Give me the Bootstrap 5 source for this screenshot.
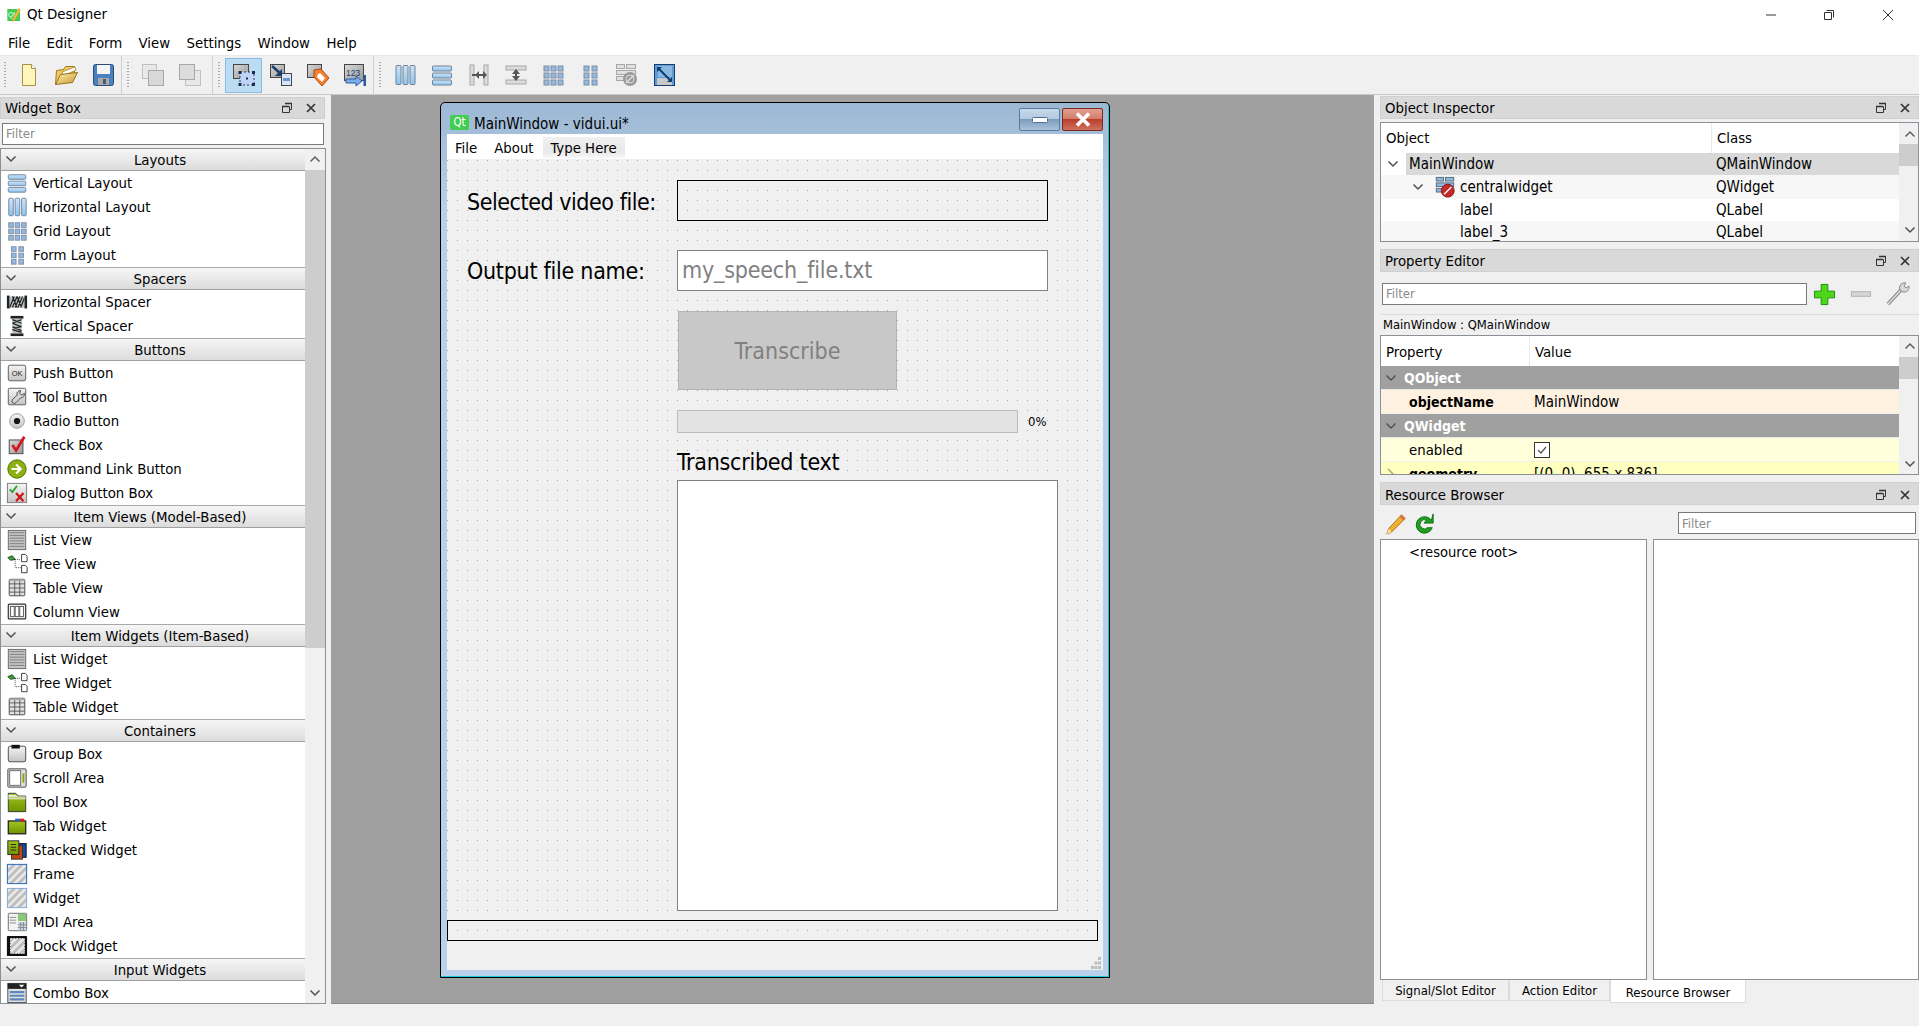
<!DOCTYPE html>
<html lang="en">
<head>
<meta charset="utf-8">
<title>Qt Designer</title>
<link href="https://cdn.jsdelivr.net/npm/bootstrap@5.3.0/dist/css/bootstrap.min.css" rel="stylesheet">
<style>
html,body{height:1026px;overflow:hidden}
body{font-family:"DejaVu Sans Condensed","DejaVu Sans",sans-serif;font-stretch:condensed;font-size:14.8px;line-height:1.2;color:#000;background:#f0f0f0;width:1919px}
svg{display:block;flex:none}
.flex-none{flex:none}
.ttl{height:30px;background:#fff;padding-left:6px}
.ttl-name{font-size:14.9px;margin-left:5px}
.wctl{width:58.5px;display:flex;justify-content:center}
.wctls{margin-right:2px}
.mnu{height:25px;background:#fff;padding-left:8px;gap:16.4px;font-size:14.8px}
.tbar{height:40px;background:#f0f0f0;border-top:1px solid #e8e8e8;border-bottom:1px solid #c8c8c8;flex:none}
.tgrp{height:38px;border-right:1px solid #d0d0d0}
.grip{width:2px;height:26px;margin-left:5px;margin-right:5px;background:repeating-linear-gradient(#a8a8a8 0 1px,transparent 1px 3px)}
.grip-first{margin-left:4px;margin-right:4px}
.tbtn{width:37px;height:35px;border:1px solid transparent}
.tbtn-on{background:#bcdcf4;border-color:#8cbce4}
.work{height:909px}
.ldock{width:331px;flex:none;padding-top:2px}
.dk-title{height:22px;background:#d9d9d9;border:1px solid #d0d0d0;padding:0 7px 0 4px;font-size:14.8px;flex:none}
.ldock .dk-title{width:325px;margin-bottom:4px}
.dk-ctl{gap:12px}
.flt{border:1px solid #7a7a7a;border-radius:0;padding:0 3px;height:22px;min-height:0;font:inherit;font-size:13px;background:#fff;box-shadow:none}
.flt::placeholder{color:#8a8a8a;opacity:1}
.ldock .flt{width:322px;margin-left:2px;margin-bottom:3px}
.wbox{width:326px;height:857px;border:1px solid #8a8f98;background:#fff;overflow:hidden}
.wlist{width:304px;overflow:hidden}
.whd{height:23px;background:linear-gradient(#f6f6f6,#dcdcdc);border-top:1px solid #a8a8a8;border-bottom:1px solid #a0a0a0;position:relative;text-align:center;font-size:14.8px;line-height:21px;padding-left:14px}
.wlist>.whd:first-child{border-top:0;height:22px}
.whd svg{position:absolute;left:3px;top:3px}
.wit{height:24px;padding-left:5px;gap:5px;white-space:nowrap}
.sbar{width:20px;flex:none;background:#f0f0f0;display:flex;flex-direction:column;align-items:center}
.wbox .sbar{height:855px}
.sb-b{height:21px;flex:none;display:flex;align-items:center;justify-content:center;width:100%}
.sb-h{background:#cdcdcd;width:100%;flex:none;height:478px}
.sb-r{width:21px;height:100%}
.sb-s{height:22px}
.mdi{flex:1 1 auto;background:#a0a0a0;border-bottom:1px solid #8a8a90;padding:7px 0 0 109px}
.fwin{width:670px;height:876px;border:1px solid #000;border-radius:5px 5px 0 0;background:linear-gradient(#9db8d4,#b9d1ea 110px);padding:0 6px 6px;box-shadow:inset -1px -1px 0 #1fc8e0;box-sizing:border-box}
.fw-t{height:31px;position:relative}
.fw-name{font-size:15px;margin-left:5px;padding-top:12px}
.qtico{width:19px;height:15px;background:#41cd52;color:#fff;font-size:11.500px;line-height:14px;text-align:center;border-radius:2px;margin-left:3px;margin-top:12px;font-family:"DejaVu Sans",sans-serif}
.fw-btn{width:41px;height:23px;border:1px solid #5f7a9a;border-radius:2px;margin-left:2px;display:flex;align-items:center;justify-content:center;background:linear-gradient(#c6d8ea 0,#b5cbe2 45%,#7e9cbc 50%,#a8c2dc 100%)}
.fw-x{background:linear-gradient(#e2a090 0,#d47e6c 45%,#b8402c 50%,#d07060 100%);border-color:#7a2a22}
.fw-ctl{position:absolute;right:0;top:5px;display:flex}
.fw-mnu{height:25px;background:#fff;padding:2px 0 0 8px}
.fm-i{margin-right:17px}
.fm-th{padding:0 8px;height:21px;background:linear-gradient(#f0f0f0,#e8e8e8 70%,#f8f8f8);margin-left:-8px}
.canv{height:786px;padding-top:21px;background-image:conic-gradient(from 270deg at 1px 1px,#a6a6a6 25%,transparent 0);background-size:10px 10px;background-position:0 1px;background-color:#f0f0f0}
.stbar{height:25px;background:#f0f0f0;position:relative}
.fm-row{display:flex;align-items:center;padding-left:20px;height:41px}
.fm-lbl{width:210px;font-size:23px;white-space:nowrap;height:41px}
.ls-a{letter-spacing:-.45px;line-height:45px}
.ls-b{letter-spacing:-.27px;line-height:43px}
.mt-fm{margin-top:29px}
.fm-box{width:371px;height:41px;border:1px solid #000}
.fm-le{width:371px;height:41px;border:1px solid #808080;border-radius:0;background:#fff;font:inherit;font-size:23px;letter-spacing:-.18px;padding:0 4px 1px;box-shadow:none}
.fm-le::placeholder{color:#808080;opacity:1}
.btn.fm-btn:disabled{margin:20px 0 0 231px;width:219px;height:79px;background:#c8c8c8;border:1px solid #b4b4b4;border-radius:0;color:#808080;font:inherit;font-size:23px;padding:3px 0 0;display:block;opacity:1}
.fm-prog{margin:20px 0 0 230px;height:23px;font-size:13px}
.fm-bar{width:341px;height:23px;background:#e3e3e3;border:1px solid #bcbcbc;border-radius:0;margin-right:10px}
.fm-cap{margin:12px 0 0 230px;font-size:23px;letter-spacing:-.25px;line-height:35px;height:35px;white-space:nowrap}
.fm-te{margin-left:230px;width:381px;height:431px;background:#fff;border:1px solid #808080}
.fm-st{margin-top:9px;width:651px;height:21px;border:1px solid #000}
.sgrip{position:absolute;right:2px;bottom:1px}
.rdock{width:545px;flex:none;padding:1px 0 0 6px;height:908px}
.rdock .dk-title{width:539px;height:23px}
.rdock .dk-shift{padding-top:2px}
.panel{border:1px solid #8a8f98;background:#fff;overflow:hidden;position:relative}
.p-obj{height:120px;margin:3px 0 7px;width:539px}
.p-prop{height:141px;width:539px}
.tcol{width:518px;overflow:hidden;flex:none}
.thd{height:30px;background:#fff}
.p-prop .thd>*{padding-top:2px}
.c1{width:331px;padding-left:5px;border-right:1px solid #e8e8e8;height:100%}
.c1b{width:149px;padding-left:5px;border-right:1px solid #e8e8e8;height:100%}
.c2{padding-left:5px}
.trow{font-size:15px;position:relative;white-space:nowrap}
.row-22{height:22px}
.row-24{height:24px}
.t-sel{background:#d9d9d9;margin-left:25px;width:493px}
.t-alt{background:#f7f7f7}
.col-cls{position:absolute;left:335px;top:0;height:100%;display:flex;align-items:center}
.cc-sel{left:310px}
.col-val{position:absolute;left:153px;top:1px;height:100%;display:flex;align-items:center;font-size:15px}
.tx-a{margin-left:-1px}
.arr-a{position:absolute;left:5px;top:34px}
.arr-b{margin-left:30px}
.ic-cw{margin-left:9px}
.tx-b{margin-left:4px}
.tx-c{margin-left:79px}
.pf-row{height:42px;padding:11px 0 0 2px;flex:none}
.pf-row .flt{width:425px;flex:none}
.pb-1i{margin:0 0 0 6px}
.pb-2i{margin:0 0 0 14px}
.pb-3i{margin:-1px 0 0 14px}
.obj-cap{height:21px;border-top:1px solid #dcdcdc;font-size:12.9px;padding-left:3px;flex:none}
.pr{height:24px;border-bottom:1px solid #f0f0f0;font-size:14.8px;position:relative;white-space:nowrap;padding-left:28px;padding-top:2px}
.pr-g{background:#a0a0a0;color:#fff;font-weight:700;font-size:14px;padding-left:23px;border-bottom-color:#e8e8e8}
.pr-b{font-size:14px}
.pr-o{background:#fff1e0}
.pr-y{background:#ffffdc}
.pr-y2{background:#ffffbf}
.arr-p{position:absolute;left:3px;top:5px}
.arr-g{position:absolute;left:4px;top:5px}
.cbox{width:16px;height:16px;border:1px solid #333;background:#fff}
.dk-res{margin-top:7px}
.res-bar{height:34px;flex:none;padding-top:8px}
.rb-1{margin-left:5px}
.rb-2{margin-left:6px}
.rb-f{width:238px;margin-left:243px;margin-top:-1px}
.p-resl{width:267px;height:441px;padding:3px 0 0 28px;font-size:14.6px}
.p-resr{width:266px;height:441px;margin-left:6px}
.dtabs{height:23px;padding-left:2px;font-size:13px;flex:none}
.dtab{height:21px;background:#f0f0f0;border:1px solid #dcdcdc;border-top:0;text-align:center;line-height:22px}
.dtab-on{height:23px;background:#fff;line-height:25px}
.dt-1{width:127px}
.dt-2{width:101px}
.dt-3{width:136px}
.sbot{height:22px;background:#f0f0f0;flex:none}
.sdefs{width:0;height:0;overflow:hidden}
.ic-lbl{font-family:"Liberation Sans",sans-serif}
</style>
</head>
<body class="d-flex flex-column">

<svg class="sdefs" width="0" height="0" aria-hidden="true">
<defs>
<pattern id="hat" width="6" height="6" patternUnits="userSpaceOnUse" patternTransform="rotate(45)"><rect width="6" height="6" fill="#e8e8e8"/><rect width="3" height="6" fill="#bdbdbd"/></pattern>
<linearGradient id="gy" x1="0" y1="0" x2="0" y2="1"><stop offset="0" stop-color="#f4f4f4"/><stop offset="1" stop-color="#c4c4c4"/></linearGradient>
<linearGradient id="gd" x1="0" y1="0" x2="1" y2="1"><stop offset="0" stop-color="#d8d8d8"/><stop offset="1" stop-color="#9a9a9a"/></linearGradient>
<linearGradient id="gb" x1="0" y1="0" x2="0" y2="1"><stop offset="0" stop-color="#cfe4f8"/><stop offset="1" stop-color="#8cc4ee"/></linearGradient>
<linearGradient id="gg" x1="0" y1="0" x2="0" y2="1"><stop offset="0" stop-color="#a4c420"/><stop offset="1" stop-color="#6e9400"/></linearGradient>
<linearGradient id="gf" x1="0" y1="0" x2="1" y2="1"><stop offset="0" stop-color="#fff0b0"/><stop offset="1" stop-color="#c89a30"/></linearGradient>
</defs>
<symbol id="i-v" viewBox="0 0 24 24"><g fill="url(#gb)" stroke="#6f8299"><rect x="2.500" y="3" width="19" height="5" rx="1"/><rect x="2.500" y="10" width="19" height="5" rx="1"/><rect x="2.500" y="17" width="19" height="5" rx="1"/></g></symbol>
<symbol id="i-h" viewBox="0 0 24 24"><g fill="url(#gb)" stroke="#6f8299"><rect x="3" y="2.500" width="5" height="19" rx="1"/><rect x="10" y="2.500" width="5" height="19" rx="1"/><rect x="17" y="2.500" width="5" height="19" rx="1"/></g></symbol>
<symbol id="i-g" viewBox="0 0 24 24"><g fill="#94b8e0" stroke="#7f8ea3"><rect x="3" y="3" width="5" height="5"/><rect x="10" y="3" width="5" height="5"/><rect x="17" y="3" width="5" height="5"/><rect x="3" y="10" width="5" height="5"/><rect x="10" y="10" width="5" height="5"/><rect x="17" y="10" width="5" height="5"/><rect x="3" y="17" width="5" height="5"/><rect x="10" y="17" width="5" height="5"/><rect x="17" y="17" width="5" height="5"/></g></symbol>
<symbol id="i-f" viewBox="0 0 24 24"><g fill="#94b8e0" stroke="#7f8ea3"><rect x="6" y="3" width="5" height="5"/><rect x="14" y="3" width="5" height="5"/><rect x="6" y="10" width="5" height="5"/><rect x="14" y="10" width="5" height="5"/><rect x="6" y="17" width="5" height="5"/><rect x="14" y="17" width="5" height="5"/></g></symbol>
<symbol id="i-hs" viewBox="0 0 24 24"><rect x="1" y="5" width="3" height="14" fill="#222"/><rect x="20" y="5" width="3" height="14" fill="#222"/><rect x="4" y="6" width="16" height="12" fill="#b8c0c4"/><path d="M4 18l5-12M7 18l5-12M10 18l5-12M13 18l5-12M16 18l4-10M7 6l5 12M12 6l5 12" stroke="#222" stroke-width="1.300" fill="none"/></symbol>
<symbol id="i-vs" viewBox="0 0 24 24"><rect x="5" y="1" width="14" height="3" fill="#222"/><rect x="5" y="20" width="14" height="3" fill="#222"/><rect x="7" y="4" width="10" height="16" fill="#b8c0c4"/><path d="M7 5l10 4M7 9l10 4M7 13l10 4M7 16l10 3M17 5L7 9M17 12L7 16" stroke="#222" stroke-width="1.300" fill="none"/></symbol>
<symbol id="i-ok" viewBox="0 0 24 24"><rect x="2.500" y="3.500" width="19" height="17" rx="2" fill="url(#gy)" stroke="#555"/></symbol>
<symbol id="i-tb" viewBox="0 0 24 24"><rect x="2.500" y="2.500" width="19" height="18" rx="1" fill="url(#gy)" stroke="#555"/><path d="M16 5a4 4 0 0 0-4 5l-5 5a2.500 2.500 0 0 0 4 3l5-5a4 4 0 0 0 4-5l-3 2-2-2z" fill="#d4d4d4" stroke="#444"/></symbol>
<symbol id="i-rd" viewBox="0 0 24 24"><circle cx="12" cy="12" r="8" fill="url(#gy)" stroke="#999"/><circle cx="12" cy="12" r="3.400" fill="#111"/></symbol>
<symbol id="i-ck" viewBox="0 0 24 24"><rect x="3.500" y="6.500" width="15" height="15" fill="url(#gd)" stroke="#444"/><path d="M7 12l4 6L20 3" fill="none" stroke="#d8141c" stroke-width="3"/></symbol>
<symbol id="i-cl" viewBox="0 0 24 24"><circle cx="12" cy="12" r="10" fill="#8cb010" stroke="#4a6a00"/><path d="M6 12h9M11 7l5 5-5 5" fill="none" stroke="#fff" stroke-width="2.400"/></symbol>
<symbol id="i-db" viewBox="0 0 24 24"><rect x="1.500" y="1.500" width="21" height="21" fill="url(#gy)" stroke="#777"/><path d="M4 8l3 3 5-7" fill="none" stroke="#30a030" stroke-width="2"/><path d="M11 12l8 9M19 12l-8 9" stroke="#d01818" stroke-width="2.500"/></symbol>
<symbol id="i-lv" viewBox="0 0 24 24"><rect x="2.500" y="1.500" width="19" height="21" fill="#c4c4c4" stroke="#666"/><path d="M4 4h16M4 7h16M4 10h16M4 13h16M4 16h16M4 19h16" stroke="#7c7c7c"/></symbol>
<symbol id="i-tv" viewBox="0 0 24 24"><path d="M2 5l5-2 3 4-5 1z" fill="#3c9c3c" stroke="#1c4c1c"/><path d="M10 7h6M10 7v9h6" stroke="#444" stroke-dasharray="1 1" fill="none"/><path d="M17 1.500h4l2 2v6h-6zM17 13.500h4l2 2v6h-6z" fill="#fff" stroke="#333"/></symbol>
<symbol id="i-tt" viewBox="0 0 24 24"><rect x="3.500" y="2.500" width="17" height="18" rx="1" fill="#e0e0e0" stroke="#444"/><path d="M3.500 7.500h17M3.500 12h17M3.500 16.500h17M9.500 2.500v18M15 2.500v18" stroke="#555"/><path d="M3.500 2.500h17v2h-17z" fill="#aaa"/></symbol>
<symbol id="i-cv" viewBox="0 0 24 24"><rect x="2.500" y="3.500" width="19" height="16" rx="1" fill="#f0f0f0" stroke="#333" stroke-width="1.300"/><rect x="5" y="6" width="4" height="11" fill="#fff" stroke="#555"/><rect x="10" y="6" width="4" height="11" fill="#fff" stroke="#555"/><rect x="15" y="6" width="4" height="11" fill="#fff" stroke="#555"/></symbol>
<symbol id="i-gb" viewBox="0 0 24 24"><rect x="2.500" y="3.500" width="19" height="17" rx="2" fill="url(#gy)" stroke="#444"/><rect x="6" y="2" width="9" height="4" fill="#111"/></symbol>
<symbol id="i-sa" viewBox="0 0 24 24"><rect x="2" y="2" width="20" height="20" rx="1" fill="#ddd" stroke="#444"/><rect x="4" y="4" width="12" height="16" fill="#fff" stroke="#666"/><rect x="18" y="7" width="2" height="10" fill="#88a800"/></symbol>
<symbol id="i-tx" viewBox="0 0 24 24"><path d="M2.500 2.500h8l3 3h8v17h-19z" fill="url(#gg)" stroke="#333"/><path d="M2.500 5h9M2.500 8.500h19M2.500 6.500h19" stroke="#eee" stroke-width="1.200"/></symbol>
<symbol id="i-tw" viewBox="0 0 24 24"><rect x="2.500" y="6.500" width="19" height="14" fill="url(#gg)" stroke="#222" stroke-width="1.400"/><rect x="10" y="4" width="5" height="3" fill="#1c6cc8"/><rect x="15" y="4" width="5" height="3" fill="#d02020"/></symbol>
<symbol id="i-sw" viewBox="0 0 24 24"><rect x="11" y="5" width="11" height="15" fill="#1848a0" stroke="#111"/><rect x="6" y="7" width="12" height="15" fill="#c04810" stroke="#333"/><rect x="2" y="2" width="12" height="15" fill="url(#gg)" stroke="#222"/><path d="M5 6h6M5 9h6M5 12h6" stroke="#222"/></symbol>
<symbol id="i-fr" viewBox="0 0 24 24"><rect x="1.500" y="1.500" width="21" height="21" fill="url(#hat)" stroke="#2e6ab8" stroke-width="1.100"/></symbol>
<symbol id="i-wd" viewBox="0 0 24 24"><rect x="1.500" y="1.500" width="21" height="21" fill="url(#hat)" stroke="#7ea6dc"/></symbol>
<symbol id="i-md" viewBox="0 0 24 24"><rect x="2.500" y="2.500" width="20" height="19" rx="1" fill="#f2f2f2" stroke="#666"/><rect x="13" y="3" width="9" height="8" fill="#8cc878"/><rect x="13" y="12" width="9" height="9" fill="#c8d8ee"/><path d="M4 7h7M4 10h7M4 13h7M13 15h9M13 18h9M16 12v9M19 12v9" stroke="#888"/></symbol>
<symbol id="i-dk" viewBox="0 0 24 24"><rect x="1" y="1" width="22" height="22" rx="1" fill="#111"/><rect x="5" y="4" width="15" height="16" fill="url(#hat)" stroke="#fff" stroke-dasharray="2 1"/></symbol>
<symbol id="i-cb" viewBox="0 0 24 24"><rect x="2" y="1.500" width="20" height="21" fill="#e0e0e0" stroke="#444"/><rect x="2" y="1.500" width="20" height="6" fill="#222"/><path d="M14 3l3 3 3-3z" fill="#fff"/><path d="M4 11h16M4 15h16M4 19h16" stroke="#5c88bc" stroke-width="2.400"/></symbol>
<symbol id="i-chev" viewBox="0 0 14 14"><path d="M2.500 4.500L7 9l4.500-4.500" fill="none" stroke="#505050" stroke-width="1.500"/></symbol>
<symbol id="i-chev-u" viewBox="0 0 14 14"><path d="M2.500 9.500L7 5l4.500 4.500" fill="none" stroke="#606060" stroke-width="1.500"/></symbol>
<symbol id="i-float" viewBox="0 0 12 12"><path d="M4.500 1.500h6v6h-2M1.500 4.500h7v6h-7z" fill="none" stroke="#333"/><path d="M4 1.500h7M1 4.500h7" stroke="#333" stroke-width="1.300"/></symbol>
<symbol id="i-x" viewBox="0 0 12 12"><path d="M2 2l8 8M10 2l-8 8" stroke="#333" stroke-width="1.700"/></symbol>
<symbol id="i-new" viewBox="0 0 24 24"><path d="M5.500 1.500h9l4 4v17h-13z" fill="#fff6bc" stroke="#a89048"/><path d="M14.500 1.500v4h4" fill="#fff" stroke="#a89048"/></symbol>
<symbol id="i-open" viewBox="0 0 24 24"><path d="M1.500 21.500l1-14 7-1 2-3h9v6z" fill="#f0c860" stroke="#a07c20"/><path d="M8 9l13-5 1 3-13 6z" fill="#fff" stroke="#b89a50"/><path d="M1.500 21.500l5-10 17-2-5 10z" fill="url(#gf)" stroke="#987020"/></symbol>
<symbol id="i-save" viewBox="0 0 24 24"><rect x="2.500" y="1.500" width="20" height="21" rx="2" fill="#4a80c0" stroke="#2c4c78"/><rect x="6" y="2" width="13" height="9" fill="#f4f4f4"/><rect x="7" y="15" width="11" height="7" fill="#a8a8a8"/><rect x="12" y="16" width="3" height="5" fill="#4a5a70"/></symbol>
<symbol id="i-c1" viewBox="0 0 24 24"><rect x="1.500" y="1.500" width="14" height="14" fill="#e8e8e8" stroke="#c0c0c0"/><rect x="7.500" y="7.500" width="15" height="15" fill="#d8d8d8" stroke="#a8a8a8"/></symbol>
<symbol id="i-c2" viewBox="0 0 24 24"><rect x="7.500" y="7.500" width="15" height="15" fill="#e8e8e8" stroke="#c0c0c0"/><rect x="1.500" y="1.500" width="15" height="15" fill="#dcdcdc" stroke="#a8a8a8"/></symbol>
<symbol id="i-ed" viewBox="0 0 24 24"><rect x="1.500" y="1.500" width="15" height="14" fill="url(#gd)" stroke="#444"/><rect x="8" y="9" width="14" height="13" fill="#c0d4fa" stroke="#2c3c60" stroke-dasharray="2 2"/><g fill="#1c2c50"><rect x="6.500" y="8" width="3" height="3"/><rect x="20" y="8" width="3" height="3"/><rect x="6.500" y="20" width="3" height="3"/><rect x="20" y="20" width="3" height="3"/><rect x="14" y="14.500" width="2" height="2"/></g></symbol>
<symbol id="i-sg" viewBox="0 0 24 24"><rect x="1.500" y="1.500" width="14" height="13" fill="url(#gd)" stroke="#444"/><rect x="12.500" y="10.500" width="10" height="12" fill="#d8e4f4" stroke="#445"/><rect x="14" y="15" width="7" height="3" fill="#6a94cc"/><path d="M3 3l9 8" stroke="#1c3c70" stroke-width="2.400"/><path d="M13 6v7H6z" fill="#1c3c70"/></symbol>
<symbol id="i-bd" viewBox="0 0 24 24"><rect x="1.500" y="1.500" width="14" height="13" fill="url(#gd)" stroke="#444"/><path d="M8 7l7-1 8 9-7 8-8-9z" fill="#f48030" stroke="#b04810"/><path d="M12 11l2-1 5 5-3 4-5-5z" fill="#fff"/></symbol>
<symbol id="i-tab" viewBox="0 0 24 24"><rect x="1.500" y="1.500" width="19" height="16" fill="url(#gd)" stroke="#444"/></symbol>
<symbol id="i-tab2" viewBox="0 0 24 24"><path d="M3 16h10v-3l6 5-6 5v-3H3z" fill="#7caeea" stroke="#2c5ca0"/><rect x="20.500" y="12" width="2.500" height="11" fill="#2c5ca0"/></symbol>
<symbol id="i-hbrk" viewBox="0 0 24 24"><g fill="#dcdcdc" stroke="#a8a8a8"><rect x="3" y="2" width="4" height="20"/><rect x="17" y="2" width="4" height="20"/></g><path d="M5 12h14" stroke="#555" stroke-width="2"/><path d="M8 12l4-4v8zM20 12l-4-4v8z" fill="#555"/></symbol>
<symbol id="i-vbrk" viewBox="0 0 24 24"><g fill="#dcdcdc" stroke="#a8a8a8"><rect x="2" y="3" width="20" height="4"/><rect x="2" y="17" width="20" height="4"/></g><path d="M12 7v10" stroke="#555" stroke-width="2"/><path d="M12 6l-4 5h8zM12 18l-4-5h8z" fill="#555"/></symbol>
<symbol id="i-brk" viewBox="0 0 24 24"><g fill="#e0e0e0" stroke="#a8a8a8"><rect x="1.500" y="1.500" width="8" height="4"/><rect x="11.500" y="1.500" width="9" height="4"/><rect x="1.500" y="7.500" width="19" height="4"/><rect x="1.500" y="13.500" width="12" height="4"/></g><circle cx="15" cy="16" r="7" fill="#9a9a9a"/><path d="M11 20l8-8" stroke="#ddd" stroke-width="1.500"/><circle cx="15" cy="16" r="4" fill="none" stroke="#ddd"/></symbol>
<symbol id="i-brk2" viewBox="0 0 24 24"><g fill="#8cb8e0" stroke="#586878"><rect x="2.500" y="1.500" width="8" height="4"/><rect x="12.500" y="1.500" width="9" height="4"/><rect x="2.500" y="7.500" width="19" height="4"/><rect x="2.500" y="13.500" width="12" height="4"/></g><circle cx="15" cy="16" r="7" fill="#c82828" stroke="#7c1010"/><path d="M11 20l8-8" stroke="#fff" stroke-width="1.500"/></symbol>
<symbol id="i-adj" viewBox="0 0 24 24"><rect x="2.500" y="1.500" width="20" height="21" fill="#5c9cd8" stroke="#1c3c70"/><rect x="5" y="15" width="15" height="7" fill="#c8c8c8"/><rect x="6" y="3" width="14" height="11" fill="#8ab8e0"/><path d="M6 5l13 13" stroke="#0c3c70" stroke-width="2"/><path d="M5 4h5l-5 5zM20 19h-5l5-5z" fill="#0c3c70"/></symbol>
<symbol id="i-plus" viewBox="0 0 24 24"><path d="M8.500 1.500h7v7h7v7h-7v7h-7v-7h-7v-7h7z" fill="#4cd818" stroke="#1c8c10"/></symbol>
<symbol id="i-minus" viewBox="0 0 24 24"><rect x="1.500" y="9.500" width="21" height="5" fill="#d4d4d4" stroke="#b0b0b0"/></symbol>
<symbol id="i-wr" viewBox="0 0 24 24"><path d="M2 22l13-14" stroke="#888" stroke-width="3.500"/><path d="M2 22l13-14" stroke="#e8e8e8" stroke-width="1.200"/><path d="M20 1a5 5 0 0 0-6 7l3 2a5 5 0 0 0 6-6l-3 2-2-2z" fill="#d8d8d8" stroke="#888"/></symbol>
<symbol id="i-pen" viewBox="0 0 24 24"><path d="M2 23l2-6L18 2l4 4L7 21z" fill="#f0b030" stroke="#a87018"/><path d="M2 23l2-6 3 4z" fill="#f8e0b0"/><path d="M18 2l4 4-2 2-4-4z" fill="#e07040"/></symbol>
<symbol id="i-rf" viewBox="0 0 24 24"><path d="M20 8a9 9 0 1 0 1 8h-5a5 5 0 1 1-1-8l-3 3h10V1z" fill="#20a020" stroke="#0c6c0c"/></symbol>
<symbol id="i-logo" viewBox="0 0 24 24"><path d="M2 3h14l5 5v13H2z" fill="#41cd52"/></symbol>
<symbol id="i-logo2" viewBox="0 0 24 24"><path d="M19 2l3 2-9 16-4 2 1-4z" fill="#f0c040" stroke="#c09020" stroke-width=".5"/></symbol>
</svg>

<header class="ttl d-flex align-items-center flex-none">
  <svg width="16" height="16" viewBox="0 0 24 24"><use href="#i-logo"/><text class="ic-lbl" x="3" y="15" font-size="10" fill="#fff">Qt</text><use href="#i-logo2"/></svg>
  <span class="ttl-name">Qt Designer</span>
  <div class="ms-auto d-flex wctls">
    <div class="wctl"><svg width="12" height="12" viewBox="0 0 12 12"><path d="M1 6h10" stroke="#333"/></svg></div>
    <div class="wctl"><svg width="12" height="12" viewBox="0 0 12 12"><path d="M3.500 1.500h7v7M1.500 3.500h7v7h-7z" fill="none" stroke="#333"/></svg></div>
    <div class="wctl"><svg width="12" height="12" viewBox="0 0 12 12"><path d="M1 1l10 10M11 1L1 11" stroke="#333"/></svg></div>
  </div>
</header>
<nav class="mnu d-flex align-items-center flex-none">
  <span>File</span><span>Edit</span><span>Form</span><span>View</span><span>Settings</span><span>Window</span><span>Help</span>
</nav>
<div class="tbar d-flex align-items-center">
  <div class="tgrp d-flex align-items-center">
    <div class="grip grip-first"></div>
    <div class="tbtn d-flex align-items-center justify-content-center"><svg width="24" height="24"><use href="#i-new"/></svg></div>
    <div class="tbtn d-flex align-items-center justify-content-center"><svg width="24" height="24"><use href="#i-open"/></svg></div>
    <div class="tbtn d-flex align-items-center justify-content-center"><svg width="24" height="24"><use href="#i-save"/></svg></div>
  </div>
  <div class="tgrp d-flex align-items-center pe-1">
    <div class="grip"></div>
    <div class="tbtn d-flex align-items-center justify-content-center"><svg width="24" height="24"><use href="#i-c1"/></svg></div>
    <div class="tbtn d-flex align-items-center justify-content-center"><svg width="24" height="24"><use href="#i-c2"/></svg></div>
  </div>
  <div class="tgrp d-flex align-items-center">
    <div class="grip"></div>
    <div class="tbtn tbtn-on d-flex align-items-center justify-content-center"><svg width="24" height="24"><use href="#i-ed"/></svg></div>
    <div class="tbtn d-flex align-items-center justify-content-center"><svg width="24" height="24"><use href="#i-sg"/></svg></div>
    <div class="tbtn d-flex align-items-center justify-content-center"><svg width="24" height="24"><use href="#i-bd"/></svg></div>
    <div class="tbtn d-flex align-items-center justify-content-center"><svg width="24" height="24" viewBox="0 0 24 24"><use href="#i-tab"/><text class="ic-lbl" x="3" y="13" font-size="8.500" fill="#1c3c70">123</text><use href="#i-tab2"/></svg></div>
  </div>
  <div class="d-flex align-items-center">
    <div class="grip"></div>
    <div class="tbtn d-flex align-items-center justify-content-center"><svg width="24" height="24"><use href="#i-h"/></svg></div>
    <div class="tbtn d-flex align-items-center justify-content-center"><svg width="24" height="24"><use href="#i-v"/></svg></div>
    <div class="tbtn d-flex align-items-center justify-content-center"><svg width="24" height="24"><use href="#i-hbrk"/></svg></div>
    <div class="tbtn d-flex align-items-center justify-content-center"><svg width="24" height="24"><use href="#i-vbrk"/></svg></div>
    <div class="tbtn d-flex align-items-center justify-content-center"><svg width="24" height="24"><use href="#i-g"/></svg></div>
    <div class="tbtn d-flex align-items-center justify-content-center"><svg width="24" height="24"><use href="#i-f"/></svg></div>
    <div class="tbtn d-flex align-items-center justify-content-center"><svg width="24" height="24"><use href="#i-brk"/></svg></div>
    <div class="tbtn d-flex align-items-center justify-content-center"><svg width="24" height="24"><use href="#i-adj"/></svg></div>
  </div>
</div>

<main class="work d-flex flex-none">
  <aside class="ldock d-flex flex-column">
    <div class="dk-title d-flex align-items-center justify-content-between"><span>Widget Box</span><div class="d-flex dk-ctl"><svg width="12" height="12"><use href="#i-float"/></svg><svg width="12" height="12"><use href="#i-x"/></svg></div></div>
    <input class="form-control flt" type="text" placeholder="Filter">
    <div class="wbox d-flex">
      <div class="wlist">
        <div class="whd"><svg width="14" height="14"><use href="#i-chev"/></svg>Layouts</div>
        <div class="wit d-flex align-items-center"><svg width="22" height="22"><use href="#i-v"/></svg>Vertical Layout</div>
        <div class="wit d-flex align-items-center"><svg width="22" height="22"><use href="#i-h"/></svg>Horizontal Layout</div>
        <div class="wit d-flex align-items-center"><svg width="22" height="22"><use href="#i-g"/></svg>Grid Layout</div>
        <div class="wit d-flex align-items-center"><svg width="22" height="22"><use href="#i-f"/></svg>Form Layout</div>
        <div class="whd"><svg width="14" height="14"><use href="#i-chev"/></svg>Spacers</div>
        <div class="wit d-flex align-items-center"><svg width="22" height="22"><use href="#i-hs"/></svg>Horizontal Spacer</div>
        <div class="wit d-flex align-items-center"><svg width="22" height="22"><use href="#i-vs"/></svg>Vertical Spacer</div>
        <div class="whd"><svg width="14" height="14"><use href="#i-chev"/></svg>Buttons</div>
        <div class="wit d-flex align-items-center"><svg width="22" height="22" viewBox="0 0 24 24"><use href="#i-ok"/><text class="ic-lbl" x="12" y="15" text-anchor="middle" font-size="8" fill="#222">OK</text></svg>Push Button</div>
        <div class="wit d-flex align-items-center"><svg width="22" height="22"><use href="#i-tb"/></svg>Tool Button</div>
        <div class="wit d-flex align-items-center"><svg width="22" height="22"><use href="#i-rd"/></svg>Radio Button</div>
        <div class="wit d-flex align-items-center"><svg width="22" height="22"><use href="#i-ck"/></svg>Check Box</div>
        <div class="wit d-flex align-items-center"><svg width="22" height="22"><use href="#i-cl"/></svg>Command Link Button</div>
        <div class="wit d-flex align-items-center"><svg width="22" height="22"><use href="#i-db"/></svg>Dialog Button Box</div>
        <div class="whd"><svg width="14" height="14"><use href="#i-chev"/></svg>Item Views (Model-Based)</div>
        <div class="wit d-flex align-items-center"><svg width="22" height="22"><use href="#i-lv"/></svg>List View</div>
        <div class="wit d-flex align-items-center"><svg width="22" height="22"><use href="#i-tv"/></svg>Tree View</div>
        <div class="wit d-flex align-items-center"><svg width="22" height="22"><use href="#i-tt"/></svg>Table View</div>
        <div class="wit d-flex align-items-center"><svg width="22" height="22"><use href="#i-cv"/></svg>Column View</div>
        <div class="whd"><svg width="14" height="14"><use href="#i-chev"/></svg>Item Widgets (Item-Based)</div>
        <div class="wit d-flex align-items-center"><svg width="22" height="22"><use href="#i-lv"/></svg>List Widget</div>
        <div class="wit d-flex align-items-center"><svg width="22" height="22"><use href="#i-tv"/></svg>Tree Widget</div>
        <div class="wit d-flex align-items-center"><svg width="22" height="22"><use href="#i-tt"/></svg>Table Widget</div>
        <div class="whd"><svg width="14" height="14"><use href="#i-chev"/></svg>Containers</div>
        <div class="wit d-flex align-items-center"><svg width="22" height="22"><use href="#i-gb"/></svg>Group Box</div>
        <div class="wit d-flex align-items-center"><svg width="22" height="22"><use href="#i-sa"/></svg>Scroll Area</div>
        <div class="wit d-flex align-items-center"><svg width="22" height="22"><use href="#i-tx"/></svg>Tool Box</div>
        <div class="wit d-flex align-items-center"><svg width="22" height="22"><use href="#i-tw"/></svg>Tab Widget</div>
        <div class="wit d-flex align-items-center"><svg width="22" height="22"><use href="#i-sw"/></svg>Stacked Widget</div>
        <div class="wit d-flex align-items-center"><svg width="22" height="22"><use href="#i-fr"/></svg>Frame</div>
        <div class="wit d-flex align-items-center"><svg width="22" height="22"><use href="#i-wd"/></svg>Widget</div>
        <div class="wit d-flex align-items-center"><svg width="22" height="22"><use href="#i-md"/></svg>MDI Area</div>
        <div class="wit d-flex align-items-center"><svg width="22" height="22"><use href="#i-dk"/></svg>Dock Widget</div>
        <div class="whd"><svg width="14" height="14"><use href="#i-chev"/></svg>Input Widgets</div>
        <div class="wit d-flex align-items-center"><svg width="22" height="22"><use href="#i-cb"/></svg>Combo Box</div>
      </div>
      <div class="sbar">
        <div class="sb-b"><svg width="14" height="14"><use href="#i-chev-u"/></svg></div>
        <div class="sb-h"></div>
        <div class="flex-grow-1"></div>
        <div class="sb-b"><svg width="14" height="14"><use href="#i-chev"/></svg></div>
      </div>
    </div>
  </aside>

  <section class="mdi">
    <div class="fwin">
      <div class="fw-t d-flex">
        <div class="qtico">Qt</div>
        <div class="fw-name">MainWindow - vidui.ui*</div>
        <div class="fw-ctl">
          <div class="fw-btn"><svg width="16" height="8" viewBox="0 0 16 8"><rect x=".5" y="1.500" width="15" height="5" rx="1" fill="#fff" stroke="#50708c"/></svg></div>
          <div class="fw-btn fw-x"><svg width="16" height="15" viewBox="0 0 16 15"><path d="M2 1.500l12 12M14 1.500l-12 12" stroke="#fff" stroke-width="3.600"/></svg></div>
        </div>
      </div>
      <div class="fw-mnu d-flex align-items-center">
        <span class="fm-i">File</span><span class="fm-i">About</span><span class="fm-th d-flex align-items-center">Type Here</span>
      </div>
      <div class="canv">
        <div class="fm-row"><div class="fm-lbl ls-a">Selected video file:</div><div class="fm-box"></div></div>
        <div class="fm-row mt-fm"><div class="fm-lbl ls-b">Output file name:</div><input class="form-control fm-le" type="text" placeholder="my_speech_file.txt"></div>
        <button class="btn fm-btn" type="button" disabled>Transcribe</button>
        <div class="fm-prog d-flex align-items-center"><div class="progress fm-bar"></div><span>0%</span></div>
        <div class="fm-cap">Transcribed text</div>
        <div class="fm-te"></div>
        <div class="fm-st"></div>
      </div>
      <div class="stbar">
        <svg class="sgrip" width="10" height="12" viewBox="0 0 10 12"><g fill="#bdbdbd"><rect x="7" width="3" height="3"/><rect x="3.500" y="4.500" width="3" height="3"/><rect x="7" y="4.500" width="3" height="3"/><rect y="9" width="3" height="3"/><rect x="3.500" y="9" width="3" height="3"/><rect x="7" y="9" width="3" height="3"/></g></svg>
      </div>
    </div>
  </section>

  <aside class="rdock d-flex flex-column">
    <div class="dk-title d-flex align-items-center justify-content-between"><span>Object Inspector</span><div class="d-flex dk-ctl"><svg width="12" height="12"><use href="#i-float"/></svg><svg width="12" height="12"><use href="#i-x"/></svg></div></div>
    <div class="panel p-obj d-flex">
      <div class="tcol">
        <div class="thd d-flex align-items-center"><div class="c1 d-flex align-items-center">Object</div><div class="c2">Class</div></div>
        <div class="trow t-sel d-flex align-items-center row-22 ps-1"><span class="tx-a">MainWindow</span><span class="col-cls cc-sel">QMainWindow</span></div>
        <div class="trow t-alt d-flex align-items-center row-24"><svg class="arr-b" width="14" height="14"><use href="#i-chev"/></svg><svg class="ic-cw" width="22" height="22"><use href="#i-brk2"/></svg><span class="tx-b">centralwidget</span><span class="col-cls">QWidget</span></div>
        <div class="trow d-flex align-items-center row-22"><span class="tx-c">label</span><span class="col-cls">QLabel</span></div>
        <div class="trow t-alt d-flex align-items-center row-22"><span class="tx-c">label_3</span><span class="col-cls">QLabel</span></div>
      </div>
      <div class="sbar sb-r">
        <div class="sb-b"><svg width="14" height="14"><use href="#i-chev-u"/></svg></div>
        <div class="sb-h sb-s"></div>
        <div class="flex-grow-1"></div>
        <div class="sb-b"><svg width="14" height="14"><use href="#i-chev"/></svg></div>
      </div>
      <svg class="arr-a" width="14" height="14"><use href="#i-chev"/></svg>
    </div>
    <div class="dk-title dk-shift d-flex align-items-center justify-content-between"><span>Property Editor</span><div class="d-flex dk-ctl"><svg width="12" height="12"><use href="#i-float"/></svg><svg width="12" height="12"><use href="#i-x"/></svg></div></div>
    <div class="pf-row d-flex">
      <input class="form-control flt" type="text" placeholder="Filter">
      <svg class="pb-1i" width="23" height="23"><use href="#i-plus"/></svg>
      <svg class="pb-2i" width="22" height="22"><use href="#i-minus"/></svg>
      <svg class="pb-3i" width="24" height="24"><use href="#i-wr"/></svg>
    </div>
    <div class="obj-cap d-flex align-items-center">MainWindow : QMainWindow</div>
    <div class="panel p-prop d-flex">
      <div class="tcol">
        <div class="thd d-flex align-items-center"><div class="c1b d-flex align-items-center">Property</div><div class="c2">Value</div></div>
        <div class="pr pr-g d-flex align-items-center"><svg class="arr-p" width="14" height="14"><use href="#i-chev"/></svg>QObject</div>
        <div class="pr pr-o pr-b d-flex align-items-center fw-bold">objectName<span class="col-val fw-normal">MainWindow</span></div>
        <div class="pr pr-g d-flex align-items-center"><svg class="arr-p" width="14" height="14"><use href="#i-chev"/></svg>QWidget</div>
        <div class="pr pr-y d-flex align-items-center">enabled<span class="col-val"><span class="cbox d-flex align-items-center justify-content-center"><svg width="12" height="12" viewBox="0 0 12 12"><path d="M2 6l3 3 5-6" fill="none" stroke="#555" stroke-width="1.300"/></svg></span></span></div>
        <div class="pr pr-y2 pr-b d-flex align-items-center fw-bold"><svg class="arr-g" width="12" height="14" viewBox="0 0 12 14"><path d="M3 2l5 5-5 5" fill="none" stroke="#b0a878" stroke-width="1.500"/></svg>geometry<span class="col-val fw-normal">[(0, 0), 655 x 836]</span></div>
      </div>
      <div class="sbar sb-r">
        <div class="sb-b"><svg width="14" height="14"><use href="#i-chev-u"/></svg></div>
        <div class="sb-h sb-s"></div>
        <div class="flex-grow-1"></div>
        <div class="sb-b"><svg width="14" height="14"><use href="#i-chev"/></svg></div>
      </div>
    </div>
    <div class="dk-title dk-res dk-shift d-flex align-items-center justify-content-between"><span>Resource Browser</span><div class="d-flex dk-ctl"><svg width="12" height="12"><use href="#i-float"/></svg><svg width="12" height="12"><use href="#i-x"/></svg></div></div>
    <div class="res-bar d-flex">
      <svg class="rb-1" width="22" height="22"><use href="#i-pen"/></svg>
      <svg class="rb-2" width="22" height="22"><use href="#i-rf"/></svg>
      <input class="form-control flt rb-f" type="text" placeholder="Filter">
    </div>
    <div class="d-flex flex-none">
      <div class="panel p-resl">&lt;resource root&gt;</div>
      <div class="panel p-resr"></div>
    </div>
    <div class="dtabs d-flex">
      <div class="dtab dt-1">Signal/Slot Editor</div>
      <div class="dtab dt-2">Action Editor</div>
      <div class="dtab dtab-on dt-3">Resource Browser</div>
    </div>
  </aside>
</main>
<footer class="sbot"></footer>
</body>
</html>
